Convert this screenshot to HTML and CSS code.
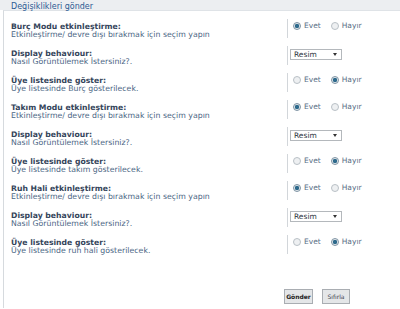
FILE: index.html
```html
<!DOCTYPE html>
<html>
<head>
<meta charset="utf-8">
<link rel="stylesheet" href="styles.css">
</head>
<body>
<div class="header">Değişiklikleri gönder</div>
<div class="panel">
  <div class="row">
    <div class="lbl"><div class="t">Burç Modu etkinleştirme:</div><div class="d">Etkinleştirme/ devre dışı bırakmak için seçim yapın</div></div>
    <div class="ctl"><span class="radio on"></span><span class="opt">Evet</span><span class="radio"></span><span class="opt">Hayır</span></div>
  </div>
  <div class="row">
    <div class="lbl"><div class="t">Display behaviour:</div><div class="d">Nasıl Görüntülemek İstersiniz?.</div></div>
    <div class="ctl sel"><span class="select"><span>Resim</span><span class="arrow"></span></span></div>
  </div>
  <div class="row">
    <div class="lbl"><div class="t">Üye listesinde göster:</div><div class="d">Üye listesinde Burç gösterilecek.</div></div>
    <div class="ctl"><span class="radio"></span><span class="opt">Evet</span><span class="radio on"></span><span class="opt">Hayır</span></div>
  </div>
  <div class="row">
    <div class="lbl"><div class="t">Takım Modu etkinleştirme:</div><div class="d">Etkinleştirme/ devre dışı bırakmak için seçim yapın</div></div>
    <div class="ctl"><span class="radio on"></span><span class="opt">Evet</span><span class="radio"></span><span class="opt">Hayır</span></div>
  </div>
  <div class="row">
    <div class="lbl"><div class="t">Display behaviour:</div><div class="d">Nasıl Görüntülemek İstersiniz?.</div></div>
    <div class="ctl sel"><span class="select"><span>Resim</span><span class="arrow"></span></span></div>
  </div>
  <div class="row">
    <div class="lbl"><div class="t">Üye listesinde göster:</div><div class="d">Üye listesinde takım gösterilecek.</div></div>
    <div class="ctl"><span class="radio"></span><span class="opt">Evet</span><span class="radio on"></span><span class="opt">Hayır</span></div>
  </div>
  <div class="row">
    <div class="lbl"><div class="t">Ruh Hali etkinleştirme:</div><div class="d">Etkinleştirme/ devre dışı bırakmak için seçim yapın</div></div>
    <div class="ctl"><span class="radio on"></span><span class="opt">Evet</span><span class="radio"></span><span class="opt">Hayır</span></div>
  </div>
  <div class="row">
    <div class="lbl"><div class="t">Display behaviour:</div><div class="d">Nasıl Görüntülemek İstersiniz?.</div></div>
    <div class="ctl sel"><span class="select"><span>Resim</span><span class="arrow"></span></span></div>
  </div>
  <div class="row">
    <div class="lbl"><div class="t">Üye listesinde göster:</div><div class="d">Üye listesinde ruh hali gösterilecek.</div></div>
    <div class="ctl"><span class="radio"></span><span class="opt">Evet</span><span class="radio on"></span><span class="opt">Hayır</span></div>
  </div>
  <div class="buttons">
    <span class="btn primary">Gönder</span>
    <span class="btn">Sıfırla</span>
  </div>
</div>
</body>
</html>
```
FILE: styles.css
```css
html, body {
  margin: 0;
  padding: 0;
  background: #ffffff;
  font-family: "DejaVu Sans", Verdana, sans-serif;
}
.header {
  height: 10px;
  line-height: 13px;
  padding-left: 11px;
  background: #eceef1;
  color: #2c5a93;
  font-size: 8px;
  white-space: nowrap;
}
.panel {
  margin-left: 3px;
  border-left: 1px solid #d6dade;
  border-top: 1px solid #dfe3e7;
  padding: 8px 0 0 7px;
  height: 298px;
  box-sizing: border-box;
}
.row {
  display: grid;
  grid-template-columns: 276px 1fr;
  height: 27px;
}
.lbl {
  padding-top: 3px;
}
.t {
  font-size: 7.7px;
  font-weight: bold;
  color: #34445a;
  line-height: 9px;
  white-space: nowrap;
}
.d {
  font-size: 7.8px;
  color: #4b6684;
  line-height: 8px;
  white-space: nowrap;
}
.ctl {
  height: 19px;
  border-left: 1px solid #d2d6da;
  display: flex;
  align-items: flex-start;
  padding: 2px 0 0 5px;
  box-sizing: border-box;
}
.ctl.sel {
  padding-left: 2px;
  padding-top: 3px;
}
.radio {
  width: 6px;
  height: 6px;
  border-radius: 50%;
  border: 1px solid #b9c0c6;
  background: #eef0f2;
  margin-top: 1px;
  box-sizing: content-box;
  flex: none;
}
.radio.on {
  border-color: #7e93a3;
  background: radial-gradient(circle, #2e6a8c 0 2px, #dfe6ea 2.3px);
}
.opt {
  font-size: 7.5px;
  color: #5a6f86;
  line-height: 9px;
  margin-left: 3px;
  margin-right: 10px;
}
.select {
  width: 44px;
  height: 9px;
  border: 1px solid #b4b8bc;
  background: #ffffff;
  display: flex;
  align-items: center;
  justify-content: space-between;
  padding: 0 3px 0 3px;
  box-sizing: content-box;
  font-size: 7.5px;
  color: #2d3540;
  line-height: 9px;
}
.select .arrow {
  width: 0;
  height: 0;
  border-left: 2px solid transparent;
  border-right: 2px solid transparent;
  border-top: 3px solid #333;
  margin-right: 1px;
}
.buttons {
  display: flex;
  gap: 9px;
  padding-left: 273px;
  margin-top: 27px;
}
.btn {
  height: 13px;
  line-height: 13px;
  border: 1px solid #a9adb2;
  background: #e4e6e8;
  font-size: 6px;
  color: #3b4450;
  text-align: center;
  white-space: nowrap;
}
.btn.primary {
  width: 27px;
  font-weight: bold;
  color: #222;
}
.btn:not(.primary) {
  width: 26px;
}
```
